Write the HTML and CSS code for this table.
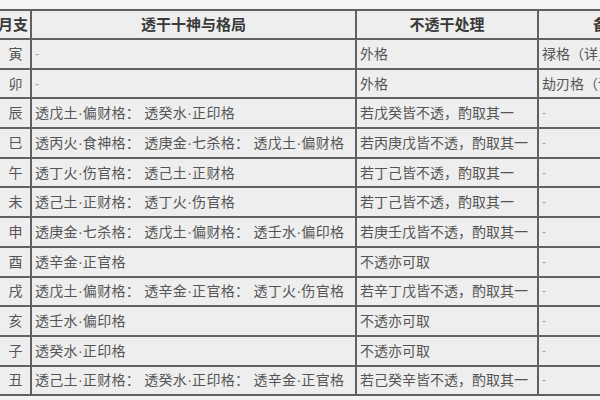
FILE: index.html
```html
<!DOCTYPE html>
<html lang="zh-CN">
<head>
<meta charset="utf-8">
<title>月支透干格局表</title>
<link rel="stylesheet" href="styles.css">
</head>
<body>
<div class="page">
<table class="grid">
  <colgroup>
    <col class="c-branch">
    <col class="c-gods">
    <col class="c-handle">
    <col class="c-note">
  </colgroup>
  <thead>
    <tr><th>月支</th><th>透干十神与格局</th><th>不透干处理</th><th>备注</th></tr>
  </thead>
  <tbody>
    <tr><td class="b">寅</td><td class="dash">-</td><td>外格</td><td>禄格（详见后文）</td></tr>
    <tr><td class="b">卯</td><td class="dash">-</td><td>外格</td><td>劫刃格（详见后文）</td></tr>
    <tr><td class="b">辰</td><td class="gods">透戊土·偏财格： 透癸水·正印格</td><td>若戊癸皆不透，酌取其一</td><td class="dash">-</td></tr>
    <tr><td class="b">巳</td><td class="gods">透丙火·食神格： 透庚金·七杀格： 透戊土·偏财格</td><td>若丙庚戊皆不透，酌取其一</td><td class="dash">-</td></tr>
    <tr><td class="b">午</td><td class="gods">透丁火·伤官格： 透己土·正财格</td><td>若丁己皆不透，酌取其一</td><td class="dash">-</td></tr>
    <tr><td class="b">未</td><td class="gods">透己土·正财格： 透丁火·伤官格</td><td>若丁己皆不透，酌取其一</td><td class="dash">-</td></tr>
    <tr><td class="b">申</td><td class="gods">透庚金·七杀格： 透戊土·偏财格： 透壬水·偏印格</td><td>若庚壬戊皆不透，酌取其一</td><td class="dash">-</td></tr>
    <tr><td class="b">酉</td><td class="gods">透辛金·正官格</td><td>不透亦可取</td><td class="dash">-</td></tr>
    <tr><td class="b">戌</td><td class="gods">透戊土·偏财格： 透辛金·正官格： 透丁火·伤官格</td><td>若辛丁戊皆不透，酌取其一</td><td class="dash">-</td></tr>
    <tr><td class="b">亥</td><td class="gods">透壬水·偏印格</td><td>不透亦可取</td><td class="dash">-</td></tr>
    <tr><td class="b">子</td><td class="gods">透癸水·正印格</td><td>不透亦可取</td><td class="dash">-</td></tr>
    <tr><td class="b">丑</td><td class="gods">透己土·正财格： 透癸水·正印格： 透辛金·正官格</td><td>若己癸辛皆不透，酌取其一</td><td class="dash">-</td></tr>
  </tbody>
</table>
</div>
</body>
</html>
```
FILE: styles.css
```css
html, body {
  margin: 0;
  padding: 0;
  overflow: hidden;
  background: #f4f4f4;
}
.page {
  padding-top: 9px;
  width: 600px;
  overflow: hidden;
}
.grid {
  margin-left: -6px;
  border-collapse: collapse;
  table-layout: fixed;
  width: 683px;
  background: #eeeeee;
  font-family: "Liberation Sans", "Noto Sans CJK SC", sans-serif;
  color: #555555;
}
.c-branch { width: 36px; }
.c-gods { width: 325px; }
.c-handle { width: 182px; }
.c-note { width: 140px; }
.grid th,
.grid td {
  border: 2px solid #606060;
  height: 27.7px;
  padding: 0 0 0 3px;
  white-space: nowrap;
  overflow: hidden;
  vertical-align: middle;
  text-align: left;
  line-height: 16px;
}
.grid th {
  font-size: 15px;
  font-weight: bold;
  color: #3a3a3a;
  text-align: center;
  padding: 0;
  height: 27px;
}
.grid td {
  font-size: 14px;
}
.grid td.gods {
  letter-spacing: 0.3px;
}
.grid td.b {
  text-align: center;
  padding: 0 0 0 5px;
}
.grid td.dash {
  color: #a0a0a0;
  font-size: 12px;
  letter-spacing: 0;
}
```
